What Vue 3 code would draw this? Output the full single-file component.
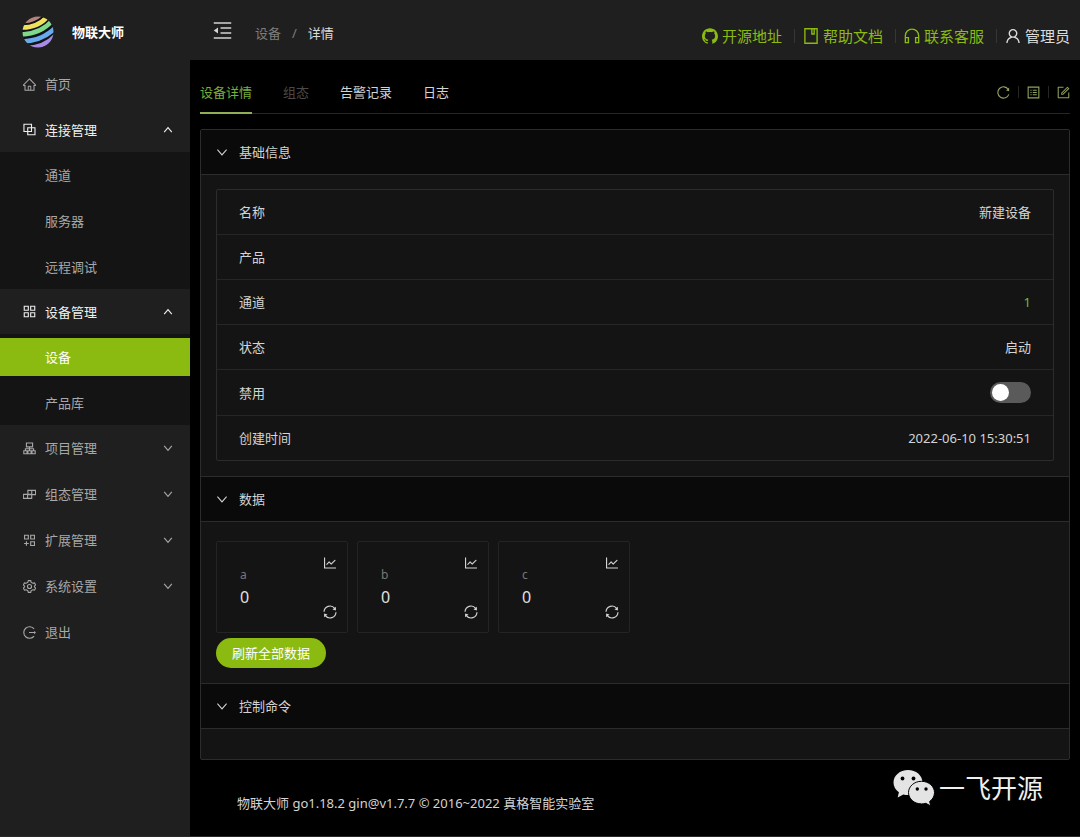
<script setup>
import { h, ref } from 'vue'

const icons = {
  home: '<path fill="currentColor" stroke="none" d="M946.5 505L560.1 118.8l-25.9-25.9a31.5 31.5 0 00-44.4 0L77.5 505a63.9 63.9 0 00-18.8 46c.4 35.2 29.7 63.3 64.9 63.3h42.5V940h691.8V614.3h43.4c17.1 0 33.2-6.7 45.3-18.8a63.6 63.6 0 0018.7-45.3c0-17-6.7-33.1-18.8-45.2zM568 868H456V664h112v204zm217.9-325.7V868H632V640c0-22.1-17.9-40-40-40H432c-22.1 0-40 17.9-40 40v228H238.1V542.3h-96l370-369.7 23.1 23.1L882 542.3h-96.1z"/>',
  block: '<path d="M130 150H650V650H130Z M390 390H890V870H390Z"/>',
  appstore: '<path d="M150 150H430V430H150Z M594 150H874V430H594Z M150 594H430V874H150Z M594 594H874V874H594Z"/>',
  apartment: '<path d="M300 130H724V400H300Z M512 400V660 M230 660V530H794V660 M120 670H340V870H120Z M402 670H622V870H402Z M684 670H904V870H684Z"/>',
  blocks: '<path d="M400 230H930V520H400Z M665 230V780 M90 500H665V780H90Z M380 500V780"/>',
  appadd: '<path d="M170 150H430V410H170Z M594 150H854V410H594Z M594 594H854V854H594Z M300 560V880 M140 720H460"/>',
  setting: '<path d="M430 110H594L630 230L740 290L860 260L935 400L850 490V534L935 624L860 764L740 734L630 794L594 914H430L394 794L284 734L164 764L89 624L174 534V490L89 400L164 260L284 290L394 230Z"/><circle cx="512" cy="512" r="140"/>',
  logout: '<path d="M830 260A400 400 0 1 0 830 764 M480 512H850"/><path fill="currentColor" stroke="none" d="M820 400L960 512L820 624Z"/>',
  down: '<path d="M170 330 L512 730 L854 330"/>',
  up: '<path d="M170 694 L512 294 L854 694"/>',
  fold: '<path d="M100 160H924 M420 395H924 M420 629H924 M100 864H924"/><path fill="currentColor" stroke="none" d="M100 512L300 370V654Z"/>',
  github: '<path fill="currentColor" stroke="none" d="M511.6 76.3C264.3 76.2 64 276.4 64 523.5 64 718.9 189.3 885 363.8 946c23.5 5.9 19.9-10.8 19.9-22.2v-77.5c-135.7 15.9-141.2-73.9-150.3-88.9C215 726 171.5 718 184.5 703c30.9-15.9 62.4 4 98.9 57.9 26.4 39.1 77.9 32.5 104 26 5.7-23.5 17.9-44.5 34.7-60.8-140.6-25.2-199.2-111-199.2-213 0-49.5 16.3-95 48.3-131.7-20.4-60.5 1.9-112.3 4.9-120 58.1-5.2 118.5 41.6 123.2 45.3 33-8.9 70.7-13.6 112.9-13.6 42.4 0 80.2 4.9 113.5 13.9 11.3-8.6 67.3-48.8 121.3-43.9 2.9 7.7 24.7 58.3 5.5 118 32.4 36.8 48.9 82.7 48.9 132.3 0 102.2-59 188.1-200 212.9a127.5 127.5 0 0138.1 91v112.5c.8 9 0 17.9 15 17.9 177.1-59.7 304.6-227 304.6-424.1 0-247.2-200.4-447.3-447.5-447.3z"/>',
  book: '<path d="M170 104H854V920H170Z M560 104V400H690V104"/>',
  service: '<path d="M140 880V500A372 372 0 0 1 884 500V880 M140 600H310V880H140Z M714 600H884V880H714Z"/>',
  user: '<path fill="currentColor" stroke="none" d="M858.5 763.6a374 374 0 00-80.6-119.5 375.63 375.63 0 00-119.5-80.6c-.4-.2-.8-.3-1.2-.5C719.5 518 760 444.7 760 362c0-137-111-248-248-248S264 225 264 362c0 82.7 40.5 156 102.8 201.1-.4.2-.8.3-1.2.5-44.8 18.9-85 46-119.5 80.6a375.63 375.63 0 00-80.6 119.5A371.7 371.7 0 00136 901.8a8 8 0 008 8.2h60c4.4 0 7.9-3.5 8-7.8 2-77.2 33-149.5 87.8-204.3 56.7-56.7 132-87.9 212.2-87.9s155.5 31.2 212.2 87.9C779 752.7 810 825 812 902.2c.1 4.4 3.6 7.8 8 7.8h60a8 8 0 008-8.2c-1-47.8-10.9-94.3-29.5-138.2zM512 534c-45.9 0-89.1-17.9-121.6-50.4S340 407.9 340 362c0-45.9 17.9-89.1 50.4-121.6S466.1 190 512 190s89.1 17.9 121.6 50.4S684 316.1 684 362c0 45.9-17.9 89.1-50.4 121.6S557.9 534 512 534z"/>',
  reload: '<path d="M840 300A390 390 0 1 0 880 640"/><path fill="currentColor" stroke="none" d="M900 170V430L690 370Z"/>',
  list: '<path d="M144 144H880V880H144Z M460 360H740 M460 512H740 M460 664H740 M300 360H380 M300 512H380 M300 664H380"/>',
  form: '<path fill="currentColor" stroke="none" d="M904 512h-56c-4.4 0-8 3.6-8 8v320H184V184h320c4.4 0 8-3.6 8-8v-56c0-4.4-3.6-8-8-8H144c-17.7 0-32 14.3-32 32v736c0 17.7 14.3 32 32 32h736c17.7 0 32-14.3 32-32V520c0-4.4-3.6-8-8-8z"/><path fill="currentColor" stroke="none" d="M355.9 534.9L354 653.8c-.1 8.9 7.1 16.2 16 16.2h.4l118-2.9c2-.1 4-.9 5.4-2.3l415.9-415c3.1-3.1 3.1-8.2 0-11.3L785.4 114.3c-1.6-1.6-3.6-2.3-5.7-2.3s-4.1.8-5.7 2.3l-415.8 415a8.3 8.3 0 00-2.3 5.6zm63.5 23.6L779.7 199l45.2 45.1-360.5 359.7-45.7 1.1.7-46.4z"/>',
  chart: '<path fill="currentColor" stroke="none" d="M888 792H200V168c0-4.4-3.6-8-8-8h-56c-4.4 0-8 3.6-8 8v688c0 4.4 3.6 8 8 8h752c4.4 0 8-3.6 8-8v-56c0-4.4-3.6-8-8-8zM305.8 637.7c3.1 3.1 8.1 3.1 11.3 0l138.3-137.6L583 628.5c3.1 3.1 8.2 3.1 11.3 0l275.4-275.3c3.1-3.1 3.1-8.2 0-11.3l-39.6-39.6a8.03 8.03 0 00-11.3 0l-230 229.9L461.4 404a8.03 8.03 0 00-11.3 0L266.3 586.7a8.03 8.03 0 000 11.3l39.5 39.7z"/>',
  sync: '<path d="M130 500A382 382 0 0 1 810 275 M894 524A382 382 0 0 1 214 749"/><path fill="currentColor" stroke="none" d="M890 180V410L670 350Z M134 844V614L354 674Z"/>',
}
const Icon = (props) =>
  h('svg', { viewBox: '64 64 896 896', 'aria-hidden': 'true', class: 'icon', innerHTML: icons[props.name] })
Icon.props = ['name']

const menu = [
  { icon: 'home', label: '首页' },
  { icon: 'block', label: '连接管理', open: true, children: ['通道', '服务器', '远程调试'] },
  { icon: 'appstore', label: '设备管理', open: true, children: ['设备', '产品库'] },
  { icon: 'apartment', label: '项目管理', group: true },
  { icon: 'blocks', label: '组态管理', group: true },
  { icon: 'appadd', label: '扩展管理', group: true },
  { icon: 'setting', label: '系统设置', group: true },
  { icon: 'logout', label: '退出' },
]
const links = [
  { icon: 'github', label: '开源地址' },
  { icon: 'book', label: '帮助文档' },
  { icon: 'service', label: '联系客服' },
]
const tabs = ['设备详情', '组态', '告警记录', '日志']
const tools = [
  { icon: 'reload', label: '刷新' },
  { icon: 'list', label: '详细' },
  { icon: 'form', label: '编辑' },
]
const points = [
  { name: 'a', value: 0 },
  { name: 'b', value: 0 },
  { name: 'c', value: 0 },
]
const disabled = ref(false)
</script>

<template>
  <div class="layout">
    <aside class="sidebar">
      <div class="brand">
        <svg class="logo" viewBox="0 0 32 32" aria-hidden="true">
          <defs><clipPath id="globe"><circle cx="16" cy="16" r="15.5" /></clipPath></defs>
          <g clip-path="url(#globe)" fill="none">
            <circle cx="16" cy="16" r="15.500" fill="#10141a" />
            <g stroke-width="4.600">
              <path d="M2 5Q12 4.500 19 -2" stroke="#b5837c" />
              <path d="M-1 11.500Q16 12 26 0" stroke="#efe25a" />
              <path d="M-1 18.500Q19 18 31 4" stroke="#7fd98a" />
              <path d="M-1 25.500Q21 25 34 11" stroke="#68aaea" />
              <path d="M3 32Q23 32 35 18" stroke="#a98be6" />
            </g>
          </g>
        </svg>
        <h1>物联大师</h1>
      </div>
      <nav>
        <ul class="menu">
          <li v-for="m in menu" :key="m.label">
            <button v-if="m.open || m.group" type="button" class="item" :class="{ open: m.open }">
              <Icon :name="m.icon" /><span>{{ m.label }}</span>
              <Icon class="arrow" :name="m.open ? 'up' : 'down'" />
            </button>
            <a v-else href="#" class="item"><Icon :name="m.icon" /><span>{{ m.label }}</span></a>
            <ul v-if="m.children" class="submenu">
              <li v-for="c in m.children" :key="c">
                <a href="#" :class="{ active: c === '设备' }">{{ c }}</a>
              </li>
            </ul>
          </li>
        </ul>
      </nav>
    </aside>

    <div class="page">
      <header class="topbar">
        <button type="button" class="fold" aria-label="收起菜单"><Icon name="fold" /></button>
        <nav class="crumbs"><a href="#">设备</a><i>/</i><span>详情</span></nav>
        <div class="links">
          <a v-for="l in links" :key="l.label" href="#"><Icon :name="l.icon" />{{ l.label }}</a>
          <a href="#" class="account"><Icon name="user" />管理员</a>
        </div>
      </header>

      <main>
        <div class="tabbar">
          <div class="tabs" role="tablist">
            <button
              v-for="(t, i) in tabs" :key="t" type="button" role="tab"
              :aria-selected="i === 0" :disabled="i === 1" :class="{ current: i === 0 }"
            >{{ t }}</button>
          </div>
          <div class="tools">
            <button v-for="t in tools" :key="t.icon" type="button" :aria-label="t.label"><Icon :name="t.icon" /></button>
          </div>
        </div>

        <div class="collapse">
          <section>
            <button type="button" class="head"><Icon name="down" />基础信息</button>
            <div class="body">
              <dl class="info">
                <div><dt>名称</dt><dd>新建设备</dd></div>
                <div><dt>产品</dt><dd></dd></div>
                <div><dt>通道</dt><dd><a href="#">1</a></dd></div>
                <div><dt>状态</dt><dd>启动</dd></div>
                <div>
                  <dt><label for="disable">禁用</label></dt>
                  <dd><input id="disable" v-model="disabled" type="checkbox" role="switch" class="switch" /></dd>
                </div>
                <div><dt>创建时间</dt><dd>2022-06-10 15:30:51</dd></div>
              </dl>
            </div>
          </section>
          <section>
            <button type="button" class="head"><Icon name="down" />数据</button>
            <div class="body data">
              <div class="cards">
                <article v-for="p in points" :key="p.name" class="card">
                  <div class="stat"><span>{{ p.name }}</span><strong>{{ p.value }}</strong></div>
                  <div class="actions">
                    <button type="button" aria-label="曲线"><Icon name="chart" /></button>
                    <button type="button" aria-label="刷新"><Icon name="sync" /></button>
                  </div>
                </article>
              </div>
              <button type="button" class="primary">刷新全部数据</button>
            </div>
          </section>
          <section>
            <button type="button" class="head"><Icon name="down" />控制命令</button>
            <div class="body"></div>
          </section>
        </div>
      </main>

      <footer>物联大师 go1.18.2 gin@v1.7.7 © 2016~2022 真格智能实验室</footer>
    </div>

    <div class="watermark">
      <svg viewBox="0 0 42 38" aria-hidden="true">
        <path fill="#e4e4e4" d="M15 1C7 1 .5 6.500.5 13.500c0 4 2 7.300 5.400 9.700L4.700 28.500l5.600-3c1.500.4 3.100.6 4.700.6 8 0 14.500-5.500 14.500-12.600S23 1 15 1z" />
        <path fill="#e4e4e4" stroke="#000" stroke-width="1" d="M28.500 12.300c-7.200 0-13 5-13 11.300s5.800 11.300 13 11.300c1.500 0 3-.2 4.300-.6l5 2.700-1.200-4.500c3-2.100 4.900-5.300 4.900-8.900 0-6.300-5.800-11.300-13-11.300z" />
        <g fill="#000">
          <circle cx="9.500" cy="9.500" r="1.900" /><circle cx="20.500" cy="9.500" r="1.900" />
          <circle cx="24.300" cy="20" r="1.700" /><circle cx="33" cy="20" r="1.700" />
        </g>
      </svg>
      <span>一飞开源</span>
    </div>
  </div>
</template>

<style>
body {
  margin: 0;
  background: #000;
}
</style>

<style scoped>
* {
  box-sizing: border-box;
}
.layout {
  position: relative;
  display: flex;
  min-height: 100vh;
  border-bottom: 1px solid #2a2a2a;
  background: #000;
  color: #d4d4d4;
  font: 13px/20px "Noto Sans", "Noto Sans CJK SC", sans-serif;
}
button {
  padding: 0;
  border: 0;
  background: none;
  color: inherit;
  font: inherit;
}
a {
  color: inherit;
  text-decoration: none;
}
ul {
  margin: 0;
  padding: 0;
  list-style: none;
}
.icon {
  display: block;
  flex: none;
  width: 13px;
  height: 13px;
  fill: none;
  stroke: currentColor;
  stroke-width: 76;
}

.sidebar {
  flex: none;
  width: 190px;
  background: #1f1f1f;
}
.brand {
  display: flex;
  align-items: center;
  gap: 18px;
  height: 61px;
  padding: 2px 22px 0;
}
.logo {
  width: 32px;
  height: 32px;
}
.brand h1 {
  margin: 0;
  color: #fff;
  font-size: 13px;
  font-weight: 700;
}
.item {
  display: flex;
  align-items: center;
  gap: 9px;
  width: 100%;
  height: 46px;
  padding: 0 17px 0 23px;
  color: #a8a8a8;
}
.item.open {
  height: 45px;
  color: #f0f0f0;
}
.item .arrow {
  width: 10px;
  height: 10px;
  margin-left: auto;
  stroke-width: 100;
}
.submenu {
  display: flex;
  flex-direction: column;
  gap: 8px;
  padding: 4px 0 3px;
  background: #141414;
}
.submenu a {
  display: block;
  padding-left: 45px;
  color: #a8a8a8;
  line-height: 38px;
}
.submenu a.active {
  background: #8bbb11;
  color: #fff;
}

.page {
  display: flex;
  flex: 1;
  flex-direction: column;
  min-width: 0;
}
.topbar {
  display: flex;
  align-items: center;
  height: 60px;
  padding: 0 10px 0 23px;
  background: #1f1f1f;
}
.fold .icon {
  width: 19px;
  height: 19px;
}
.crumbs {
  display: flex;
  gap: 11px;
  margin: 5px auto 0 23px;
  color: #dcdcdc;
}
.crumbs a,
.crumbs i {
  color: #7d7d7d;
  font-style: normal;
}
.links {
  display: flex;
  align-items: center;
  padding-top: 12px;
  color: #8bbb11;
  font-size: 15px;
}
.links a {
  display: flex;
  align-items: center;
  gap: 4px;
}
.links a + a::before {
  width: 1px;
  height: 14px;
  margin: 0 4px 0 12px;
  background: #363636;
  content: "";
}
.links .icon {
  width: 16px;
  height: 16px;
}
.links .account {
  color: #dcdcdc;
}

main {
  padding: 0 10px;
}
.tabbar {
  display: flex;
  justify-content: space-between;
  height: 54px;
  margin-bottom: 15px;
  border-bottom: 1px solid #262626;
}
.tabs {
  display: flex;
  gap: 31px;
}
.tabs button {
  height: 54px;
  padding: 16px 0 4px;
  border-bottom: 2px solid transparent;
}
.tabs button:disabled {
  color: #4a4a4a;
}
.tabs .current {
  border-color: #8fae55;
  color: #78ae3c;
}
.tools {
  display: flex;
  align-items: center;
  padding-top: 11px;
  color: #8fa35e;
}
.tools button {
  display: flex;
  align-items: center;
}
.tools button + button::before {
  width: 1px;
  height: 12px;
  margin: 0 8px;
  background: #262626;
  content: "";
}

.collapse {
  border: 1px solid #2c2c2c;
  border-radius: 2px;
  background: #141414;
}
section + section {
  border-top: 1px solid #2c2c2c;
}
.head {
  display: flex;
  align-items: center;
  gap: 11px;
  width: 100%;
  height: 45px;
  padding: 0 15px;
  border-bottom: 1px solid #2c2c2c;
  background: #0a0a0a;
}
.head .icon {
  width: 12px;
  height: 12px;
}
.body {
  padding: 14px 15px 15px;
}
.body:empty {
  padding-bottom: 16px;
}
.info {
  margin: 0;
  border: 1px solid #2c2c2c;
  border-radius: 2px;
}
.info div {
  display: flex;
  align-items: center;
  justify-content: space-between;
  padding: 12px 22px;
}
.info div + div {
  border-top: 1px solid #262626;
}
.info dd {
  margin: 0;
}
.info dd a {
  color: #6abe39;
}
.switch {
  display: block;
  width: 41px;
  height: 21px;
  margin: 0;
  padding: 2px;
  border-radius: 11px;
  background: #5a5a5a;
  appearance: none;
}
.switch::before {
  display: block;
  width: 17px;
  height: 17px;
  border-radius: 50%;
  background: #fff;
  content: "";
}
.switch:checked {
  padding-left: 22px;
  background: #8bbb11;
}
.data {
  padding-top: 19px;
}
.cards {
  display: flex;
  flex-wrap: wrap;
  gap: 9px;
  margin-bottom: 5px;
}
.card {
  display: flex;
  justify-content: space-between;
  width: 132px;
  height: 92px;
  padding: 14px 10px 13px 23px;
  border: 1px solid #242424;
  border-radius: 2px;
}
.stat {
  display: flex;
  flex-direction: column;
  padding-top: 9px;
}
.stat span {
  color: #777;
  font-size: 12px;
}
.stat strong {
  color: #e0e0e0;
  font-size: 16px;
  font-weight: 400;
  line-height: 24px;
}
.actions {
  display: flex;
  flex-direction: column;
  justify-content: space-between;
}
.actions .icon {
  width: 14px;
  height: 14px;
}
.primary {
  display: block;
  height: 30px;
  padding: 0 16px;
  border-radius: 15px;
  background: #8bbb11;
  color: #fff;
}

footer {
  padding: 33px 47px 23px;
}
.watermark {
  position: absolute;
  right: 37px;
  bottom: 29px;
  display: flex;
  align-items: center;
  gap: 4px;
  color: #f0f0f0;
  font-size: 26px;
  line-height: 38px;
}
.watermark svg {
  width: 42px;
  height: 38px;
}
</style>
